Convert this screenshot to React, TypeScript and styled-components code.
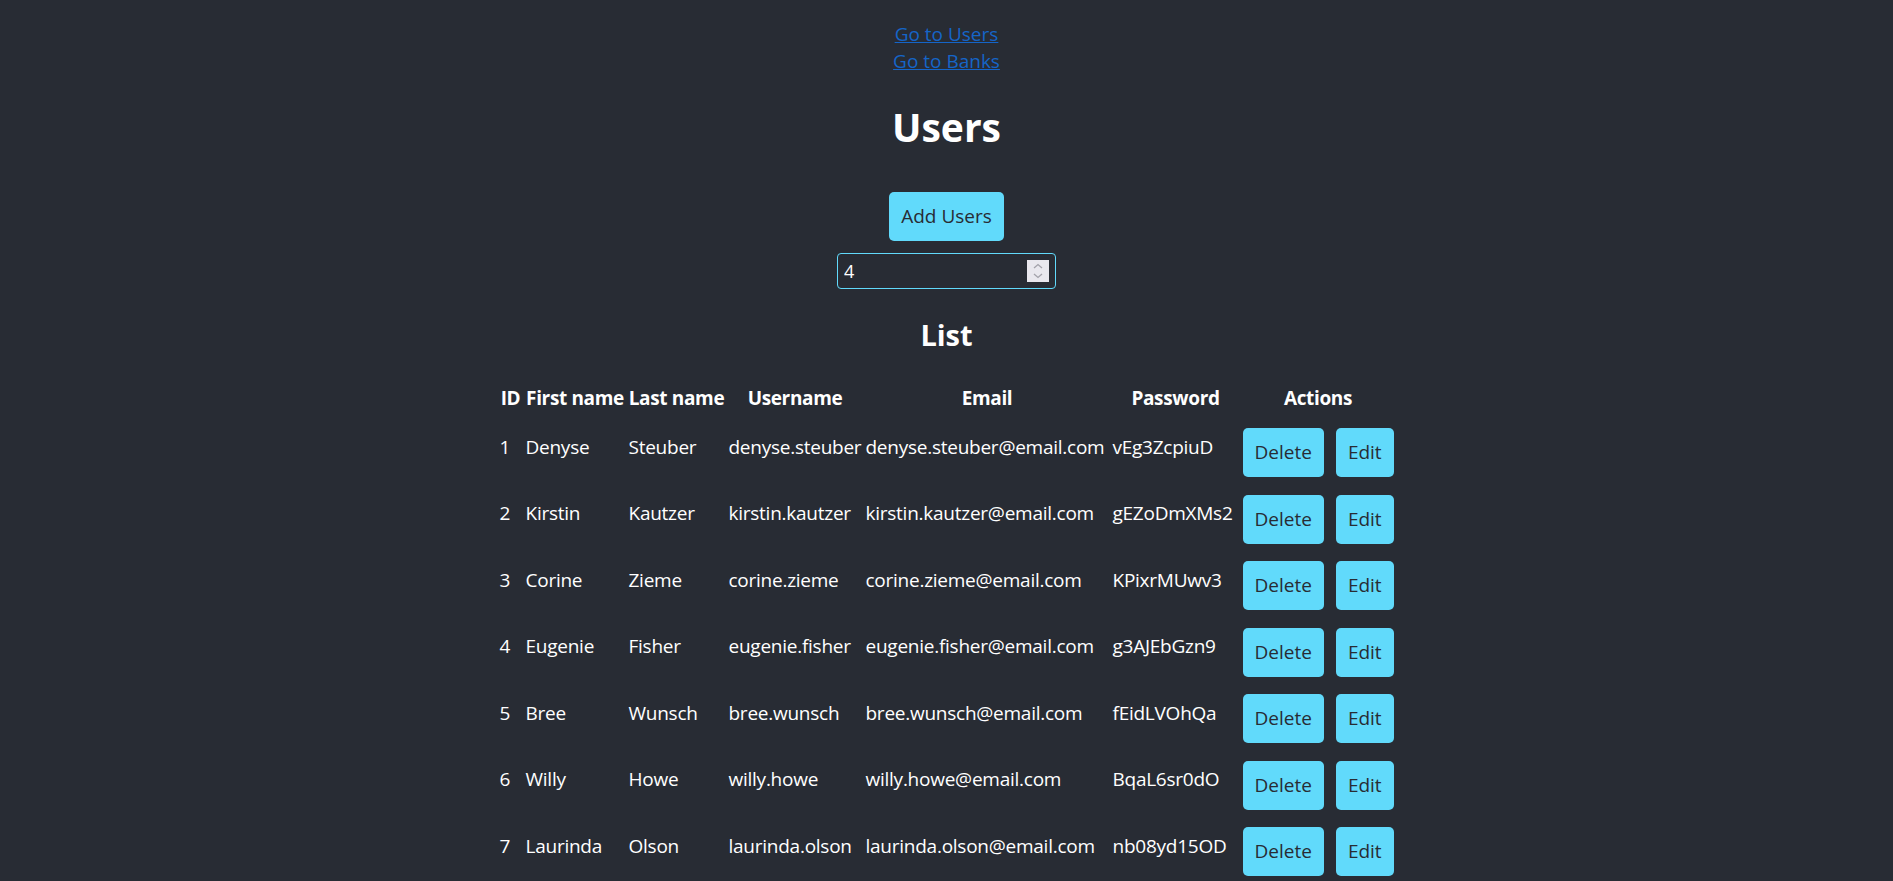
import React from "react";
import styled, { createGlobalStyle } from "styled-components";

const GlobalStyle = createGlobalStyle`
  html {
    scrollbar-width: none;
  }
  html, body {
    margin: 0;
    padding: 0;
    background: #282c34;
  }
  body {
    font-family: 'Open Sans', 'Noto Sans', sans-serif;
    color: #ffffff;
  }
`;

const Page = styled.div`
  display: flex;
  flex-direction: column;
  align-items: center;
  padding-top: 21px;
  font-size: 19px;
  line-height: 27px;
`;

const Nav = styled.nav`
  display: flex;
  flex-direction: column;
  align-items: center;
`;

const NavLink = styled.a`
  color: #1565c8;
  text-decoration: underline;
  font-size: 19px;
  line-height: 27px;
`;

const Title = styled.h1`
  margin: 25px 0 39px;
  font-size: 39px;
  line-height: 53px;
  font-weight: 700;
  color: #ffffff;
`;

const Controls = styled.div`
  display: flex;
  flex-direction: column;
  align-items: center;
  gap: 12px;
`;

const Button = styled.button`
  height: 49px;
  padding: 0 12px;
  border: none;
  border-radius: 5px;
  background: #61dafb;
  color: #282c34;
  font-family: 'Open Sans', 'Noto Sans', sans-serif;
  font-size: 19px;
  line-height: 27px;
  cursor: pointer;
  white-space: nowrap;
`;

const CountField = styled.div`
  position: relative;
  width: 219px;
  height: 36px;
`;

const CountInput = styled.input`
  box-sizing: border-box;
  width: 100%;
  height: 100%;
  background: transparent;
  border: 1px solid #61dafb;
  border-radius: 4px;
  color: #ffffff;
  font-family: 'Open Sans', 'Noto Sans', sans-serif;
  font-size: 18px;
  padding: 0 34px 0 6px;
  outline: none;
`;

const Spinner = styled.svg`
  position: absolute;
  right: 7px;
  top: 7px;
  width: 22px;
  height: 22px;
  pointer-events: none;
`;

const SubTitle = styled.h2`
  margin: 26px 0 27px;
  font-size: 29px;
  line-height: 40px;
  font-weight: 700;
  color: #ffffff;
`;

const Table = styled.table`
  table-layout: fixed;
  width: 900px;
  border-collapse: separate;
  border-spacing: 2px;
  font-size: 19px;
  line-height: 27px;
  color: #ffffff;
`;

const Th = styled.th<{ $w: number }>`
  box-sizing: border-box;
  width: ${(p) => p.$w}px;
  padding: 1px;
  font-weight: 700;
  letter-spacing: -0.35px;
  text-align: center;
  white-space: nowrap;
`;

const Td = styled.td`
  padding: 1px;
  text-align: left;
  vertical-align: middle;
  white-space: nowrap;
  letter-spacing: -0.25px;
`;

const Actions = styled.div`
  display: flex;
  gap: 12px;
  padding: 12px 0 1.5px;
  letter-spacing: 0;
`;

const columns: { label: string; w: number }[] = [
  { label: "ID", w: 24 },
  { label: "First name", w: 101 },
  { label: "Last name", w: 98 },
  { label: "Username", w: 135 },
  { label: "Email", w: 245 },
  { label: "Password", w: 128 },
  { label: "Actions", w: 153 },
];

const users = [
  { id: 1, first: "Denyse", last: "Steuber", password: "vEg3ZcpiuD" },
  { id: 2, first: "Kirstin", last: "Kautzer", password: "gEZoDmXMs2" },
  { id: 3, first: "Corine", last: "Zieme", password: "KPixrMUwv3" },
  { id: 4, first: "Eugenie", last: "Fisher", password: "g3AJEbGzn9" },
  { id: 5, first: "Bree", last: "Wunsch", password: "fEidLVOhQa" },
  { id: 6, first: "Willy", last: "Howe", password: "BqaL6sr0dO" },
  { id: 7, first: "Laurinda", last: "Olson", password: "nb08yd15OD" },
];

export default function App() {
  return (
    <Page>
      <GlobalStyle />
      <Nav>
        <NavLink href="#users">Go to Users</NavLink>
        <NavLink href="#banks">Go to Banks</NavLink>
      </Nav>
      <Title>Users</Title>
      <Controls>
        <Button type="button">Add Users</Button>
        <CountField>
          <CountInput type="text" defaultValue="4" />
          <Spinner viewBox="0 0 22 22" aria-hidden="true">
            <rect x="0" y="0" width="22" height="22" fill="#e9e8ee" />
            <polyline points="7,8 11,4.5 15,8" fill="none" stroke="#a3a2aa" strokeWidth="1.3" />
            <polyline points="7,14 11,17.5 15,14" fill="none" stroke="#a3a2aa" strokeWidth="1.3" />
          </Spinner>
        </CountField>
      </Controls>
      <SubTitle>List</SubTitle>
      <Table>
        <thead>
          <tr>
            {columns.map((c) => (
              <Th key={c.label} $w={c.w}>
                {c.label}
              </Th>
            ))}
          </tr>
        </thead>
        <tbody>
          {users.map((u) => {
            const username = `${u.first}.${u.last}`.toLowerCase();
            return (
              <tr key={u.id}>
                <Td>{u.id}</Td>
                <Td>{u.first}</Td>
                <Td>{u.last}</Td>
                <Td>{username}</Td>
                <Td>{`${username}@email.com`}</Td>
                <Td>{u.password}</Td>
                <Td>
                  <Actions>
                    <Button type="button">Delete</Button>
                    <Button type="button">Edit</Button>
                  </Actions>
                </Td>
              </tr>
            );
          })}
        </tbody>
      </Table>
    </Page>
  );
}
